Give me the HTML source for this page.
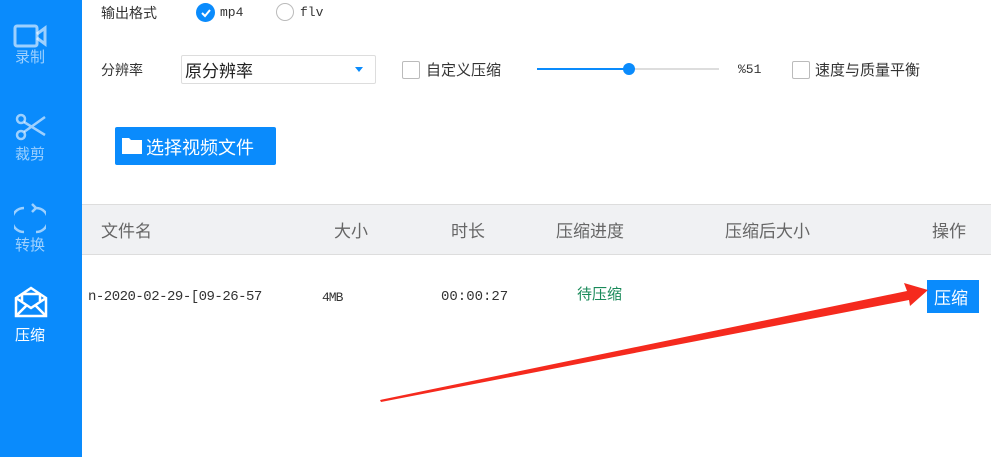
<!DOCTYPE html>
<html><head><meta charset="utf-8"><style>
*{margin:0;padding:0;box-sizing:border-box}
body{width:991px;height:457px;background:#fff;position:relative;overflow:hidden;font-family:"Liberation Sans","Noto Sans CJK SC",sans-serif;color:#333}
.sb{position:absolute;left:0;top:0;width:82px;height:457px;background:#0a8bfc}
.it{position:absolute;left:0;width:82px;text-align:center;font-size:15px;color:rgba(255,255,255,.6)}
.a{position:absolute;white-space:nowrap}
.cb{position:absolute;width:18px;height:18px;border:1px solid #bbb;border-radius:2px;background:#fff}
.mono{font-family:"Liberation Mono",monospace}
</style></head><body>
<div class="sb"></div>
<svg class="a" style="left:13px;top:24px" width="34" height="26" viewBox="0 0 34 26"><rect x="2" y="2" width="22" height="20" rx="2" fill="none" stroke="rgba(255,255,255,.6)" stroke-width="3"/><path d="M24 10 L32 4 V20 L24 14" fill="none" stroke="rgba(255,255,255,.6)" stroke-width="3"/></svg>
<div class="it" style="top:46px;left:-11px">录制</div>
<svg class="a" style="left:15px;top:113px" width="32" height="28" viewBox="0 0 32 28"><circle cx="6" cy="6" r="4" fill="none" stroke="rgba(255,255,255,.6)" stroke-width="2.5"/><circle cx="6" cy="22" r="4" fill="none" stroke="rgba(255,255,255,.6)" stroke-width="2.5"/><path d="M9 9 L30 22 M9 19 L30 4" stroke="rgba(255,255,255,.6)" stroke-width="2.5"/></svg>
<div class="it" style="top:143px;left:-11px">裁剪</div>
<svg class="a" style="left:14px;top:202px" width="32" height="34" viewBox="0 0 32 34"><path d="M10 6 A12 12 0 0 0 10 30 M22 6 A12 12 0 0 1 22 30 M18 2 L22 6 L18 10" fill="none" stroke="rgba(255,255,255,.6)" stroke-width="2.5"/></svg>
<div class="it" style="top:234px;left:-11px">转换</div>
<svg class="a" style="left:14px;top:286px" width="34" height="32" viewBox="0 0 34 32"><path d="M2 12 L17 2 L32 12 V30 H2 Z M2 12 L17 22 L32 12 M2 30 L13 19 M32 30 L21 19 M8 8 V15 M26 8 V15 M8 8 H26" fill="none" stroke="#fff" stroke-width="2.5"/></svg>
<div class="it" style="top:324px;left:-11px;color:#fff">压缩</div>

<div class="a" style="left:101px;top:3px;font-size:14px">输出格式</div>
<div class="a" style="left:196px;top:3px;width:19px;height:19px;border-radius:50%;background:#0a8bfc"></div>
<svg class="a" style="left:200px;top:7px" width="12" height="12"><path d="M2 6 L5 9 L10 3" stroke="#fff" stroke-width="2" fill="none"/></svg>
<div class="a mono" style="left:220px;top:5px;font-size:13px">mp4</div>
<div class="a" style="left:276px;top:3px;width:18px;height:18px;border-radius:50%;border:1px solid #bbb"></div>
<div class="a mono" style="left:300px;top:5px;font-size:13px">flv</div>

<div class="a" style="left:101px;top:60px;font-size:14px">分辨率</div>
<div class="a" style="left:181px;top:55px;width:195px;height:29px;border:1px solid #ddd;border-radius:2px"></div>
<div class="a" style="left:185px;top:57px;font-size:17px;color:#222">原分辨率</div>
<div class="a" style="left:355px;top:67px;border-left:4px solid transparent;border-right:4px solid transparent;border-top:5px solid #0a8bfc"></div>
<div class="cb" style="left:402px;top:61px"></div>
<div class="a" style="left:426px;top:59px;font-size:15px">自定义压缩</div>
<div class="a" style="left:537px;top:68px;width:182px;height:2px;background:#ddd"></div>
<div class="a" style="left:537px;top:68px;width:92px;height:2px;background:#0a8bfc"></div>
<div class="a" style="left:623px;top:63px;width:12px;height:12px;border-radius:50%;background:#0a8bfc"></div>
<div class="a mono" style="left:738px;top:62px;font-size:13px">%51</div>
<div class="cb" style="left:792px;top:61px"></div>
<div class="a" style="left:815px;top:59px;font-size:15px">速度与质量平衡</div>

<div class="a" style="left:115px;top:127px;width:161px;height:38px;background:#0a8bfc;border-radius:2px"></div>
<svg class="a" style="left:121px;top:135px" width="22" height="20"><path d="M1 3 H8 L10 5 H21 V19 H1 Z" fill="#fff"/></svg>
<div class="a" style="left:146px;top:134px;font-size:18px;color:#fff">选择视频文件</div>

<div class="a" style="left:82px;top:204px;width:909px;height:51px;background:#f0f1f3;border-top:1px solid #ddd;border-bottom:1px solid #ddd"></div>
<div class="a" style="left:101px;top:217px;font-size:17px;color:#666">文件名</div>
<div class="a" style="left:334px;top:217px;font-size:17px;color:#666">大小</div>
<div class="a" style="left:451px;top:217px;font-size:17px;color:#666">时长</div>
<div class="a" style="left:556px;top:217px;font-size:17px;color:#666">压缩进度</div>
<div class="a" style="left:725px;top:217px;font-size:17px;color:#666">压缩后大小</div>
<div class="a" style="left:932px;top:217px;font-size:17px;color:#666">操作</div>

<div class="a mono" style="left:88px;top:289px;font-size:14px;letter-spacing:-0.5px">n-2020-02-29-[09-26-57</div>
<div class="a mono" style="left:322px;top:290px;font-size:13px;letter-spacing:-1px">4MB</div>
<div class="a mono" style="left:441px;top:289px;font-size:14px">00:00:27</div>
<div class="a" style="left:577px;top:283px;font-size:15px;color:#1a8a5a">待压缩</div>
<div class="a" style="left:927px;top:280px;width:52px;height:33px;background:#0a8bfc"></div>
<div class="a" style="left:934px;top:284px;font-size:17px;color:#fff">压缩</div>

<svg class="a" style="left:0;top:0" width="991" height="457"><path d="M380 400 L907 291 L904 283 L928 290 L910 306 L909 300 L381 402 Z" fill="#f52a1e"/></svg>
</body></html>
